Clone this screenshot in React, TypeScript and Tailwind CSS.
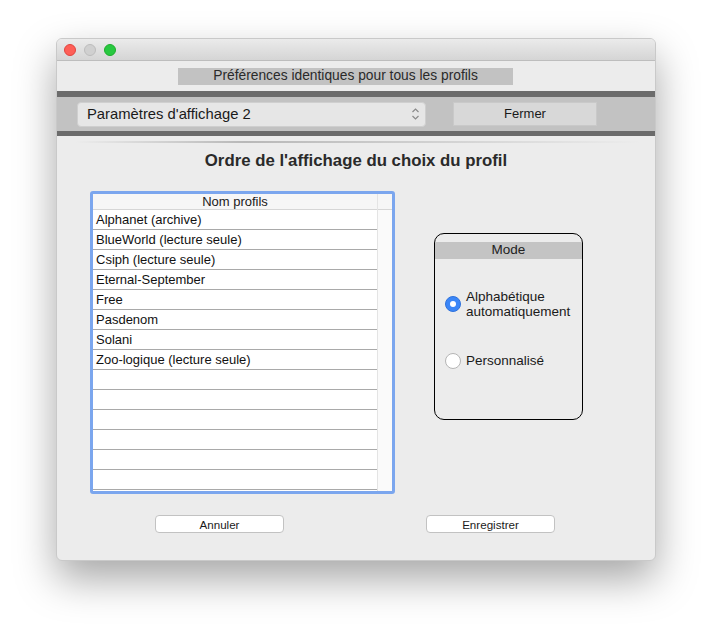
import { useState } from 'react';

const profiles = [
  'Alphanet (archive)',
  'BlueWorld (lecture seule)',
  'Csiph (lecture seule)',
  'Eternal-September',
  'Free',
  'Pasdenom',
  'Solani',
  'Zoo-logique (lecture seule)',
  '',
  '',
  '',
  '',
  '',
  '',
];

export default function App() {
  const [mode, setMode] = useState<'alpha' | 'perso'>('alpha');

  return (
    <div className="min-h-[634px] bg-white pt-[38px] pl-[56px] font-['Liberation_Sans',Arial,sans-serif] text-[#1e1e1e]">
      <div className="w-[600px] h-[523px] rounded-[6px] bg-[#ececec] border border-[#c9c9c9] shadow-[0_18px_40px_rgba(0,0,0,0.35)] overflow-hidden flex flex-col">
        {/* Title bar */}
        <div className="h-[22px] shrink-0 bg-gradient-to-b from-[#ebebeb] to-[#d5d5d5] border-b border-[#bdbdbd] flex items-center gap-[8px] pl-[7px]">
          <span className="w-[12px] h-[12px] rounded-full bg-[#fe5f57] border border-[#e0443e]" />
          <span className="w-[12px] h-[12px] rounded-full bg-[#d0d0d0] border border-[#bcbcbc]" />
          <span className="w-[12px] h-[12px] rounded-full bg-[#28c840] border border-[#1dad2b]" />
        </div>

        {/* Shared preferences caption */}
        <div className="mt-[7px] ml-[121px] w-[335px] h-[17px] bg-[#c2c2c2] flex items-center justify-center text-[13.8px] text-[#2a2a2a]">
          Préférences identiques pour tous les profils
        </div>

        {/* Toolbar band */}
        <div className="mt-[6px] w-[599px]">
          <div className="h-[6px] bg-[#6b6b6b]" />
          <div className="h-[34px] bg-[#c2c2c2] flex items-center pl-[20px] gap-[27px]">
            <div className="w-[349px] h-[25px] rounded-[4px] bg-[#e6e6e6] border border-[#cfcfcf] flex items-center justify-between pl-[9px] pr-[5px] text-[14.8px] text-[#1a1a1a]">
              <span>Paramètres d'affichage 2</span>
              <svg width="9" height="14" viewBox="0 0 9 14" fill="none" stroke="#8a8a8a" strokeWidth="1.2">
                <path d="M1.5 5 L4.5 2 L7.5 5" />
                <path d="M1.5 9 L4.5 12 L7.5 9" />
              </svg>
            </div>
            <button className="w-[144px] h-[24px] bg-[#d8d8d8] border border-[#c9c9c9] text-[13px] text-[#1a1a1a]">
              Fermer
            </button>
          </div>
          <div className="h-[5px] bg-[#6b6b6b]" />
        </div>

        {/* separator shadow */}
        <div className="mt-[5px] ml-[18px] mr-[14px] h-[2px] bg-gradient-to-r from-transparent via-[#b8b8b8] via-30% to-transparent" />

        <h1 className="mt-[8px] text-center text-[16.8px] font-bold text-[#2a2a2a] leading-[20px]">
          Ordre de l'affichage du choix du profil
        </h1>

        <div className="mt-[20px] flex items-start">
          {/* Profiles list */}
          <div className="ml-[33px] w-[305px] h-[303px] rounded-[3px] border-[3px] border-[#7ba6ee] bg-white flex overflow-hidden">
            <div className="flex-1 flex flex-col">
              <div className="h-[16px] shrink-0 bg-[#f6f6f6] border-b border-[#d6d6d6] flex items-center justify-center text-[13px] text-[#1a1a1a]">
                Nom profils
              </div>
              {profiles.map((p, i) => (
                <div
                  key={i}
                  className="h-[20px] shrink-0 border-b border-[#a9a9a9] flex items-center pl-[3px] text-[13px] text-[#111]"
                >
                  {p}
                </div>
              ))}
            </div>
            <div className="w-[15px] bg-[#fafafa] border-l border-[#e4e4e4] flex flex-col">
              <div className="h-[16px] bg-[#f6f6f6] border-b border-[#d6d6d6]" />
            </div>
          </div>

          {/* Mode group */}
          <div className="ml-[39px] mt-[42px] w-[149px] h-[187px] rounded-[10px] border border-black overflow-hidden">
            <div className="mt-[8px] h-[17px] bg-[#c4c4c4] flex items-center justify-center text-[13.5px] text-[#222]">
              Mode
            </div>
            <div className="pl-[10px] pt-[30px]">
              <label className="flex items-center gap-[5px] cursor-pointer" onClick={() => setMode('alpha')}>
                <span
                  className={
                    mode === 'alpha'
                      ? 'w-[16px] h-[16px] shrink-0 rounded-full bg-[#3b86f7] border border-[#2f72dc] flex items-center justify-center'
                      : 'w-[16px] h-[16px] shrink-0 rounded-full bg-white border border-[#b5b5b5]'
                  }
                >
                  {mode === 'alpha' && <span className="w-[6px] h-[6px] rounded-full bg-white" />}
                </span>
                <span className="text-[13.5px] leading-[15px] text-[#1a1a1a]">
                  Alphabétique
                  <br />
                  automatiquement
                </span>
              </label>
              <label className="mt-[32px] flex items-center gap-[5px] cursor-pointer" onClick={() => setMode('perso')}>
                <span
                  className={
                    mode === 'perso'
                      ? 'w-[16px] h-[16px] shrink-0 rounded-full bg-[#3b86f7] border border-[#2f72dc] flex items-center justify-center'
                      : 'w-[16px] h-[16px] shrink-0 rounded-full bg-white border border-[#b5b5b5]'
                  }
                >
                  {mode === 'perso' && <span className="w-[6px] h-[6px] rounded-full bg-white" />}
                </span>
                <span className="text-[13.5px] text-[#1a1a1a]">Personnalisé</span>
              </label>
            </div>
          </div>
        </div>

        {/* Bottom buttons */}
        <div className="mt-[21px] flex">
          <button className="ml-[98px] w-[129px] h-[18px] rounded-[4px] bg-white border border-[#c2c2c2] text-[11.6px] text-[#1a1a1a]">
            Annuler
          </button>
          <button className="ml-[142px] w-[129px] h-[18px] rounded-[4px] bg-white border border-[#c2c2c2] text-[11.6px] text-[#1a1a1a]">
            Enregistrer
          </button>
        </div>
      </div>
    </div>
  );
}
